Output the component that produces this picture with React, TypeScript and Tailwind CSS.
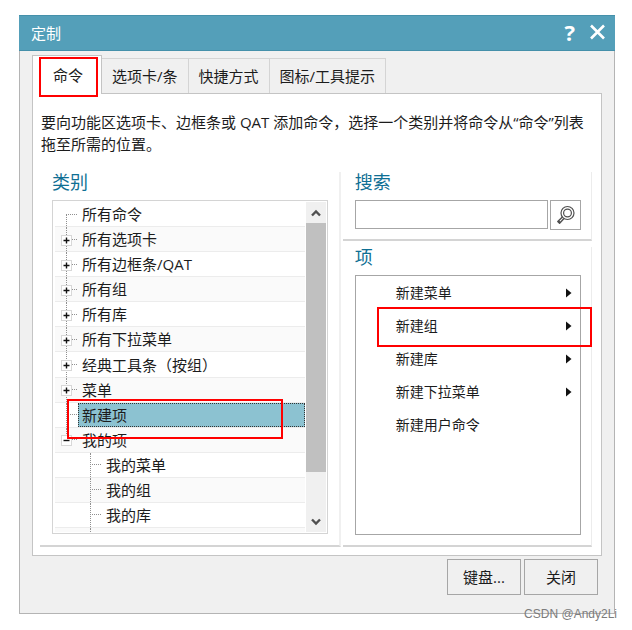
import clsx from 'clsx'
import { useState } from 'react'

type TreeItem = {
    label: string
    level: number
    state?: 'open' | 'closed'
}

const tabs = ['命令', '选项卡/条', '快捷方式', '图标/工具提示']

const categories: TreeItem[] = [
    { label: '所有命令', level: 0 },
    { label: '所有选项卡', level: 0, state: 'closed' },
    { label: '所有边框条/QAT', level: 0, state: 'closed' },
    { label: '所有组', level: 0, state: 'closed' },
    { label: '所有库', level: 0, state: 'closed' },
    { label: '所有下拉菜单', level: 0, state: 'closed' },
    { label: '经典工具条（按组）', level: 0, state: 'closed' },
    { label: '菜单', level: 0, state: 'closed' },
    { label: '新建项', level: 0 },
    { label: '我的项', level: 0, state: 'open' },
    { label: '我的菜单', level: 1 },
    { label: '我的组', level: 1 },
    { label: '我的库', level: 1 },
]

const items = [
    { label: '新建菜单', submenu: true },
    { label: '新建组', submenu: true },
    { label: '新建库', submenu: true },
    { label: '新建下拉菜单', submenu: true },
    { label: '新建用户命令', submenu: false },
]

function Highlight({ className }: { className: string }) {
    return (
        <span
            className={clsx(
                'pointer-events-none absolute z-20 border-2 border-[#f00]',
                className,
            )}
        />
    )
}

function Chevron({ up }: { up?: boolean }) {
    return (
        <svg width="12" height="10" viewBox="0 0 12 10" fill="none">
            <path
                d={up ? 'M2 7.5 6 3.5 10 7.5' : 'M2 2.5 6 6.5 10 2.5'}
                stroke="#505050"
                strokeWidth="2.4"
            />
        </svg>
    )
}

// dotted connector lines with the +/- box on top
function Branch({
    item,
    first,
    last,
}: {
    item: TreeItem
    first: boolean
    last: boolean
}) {
    return (
        <span
            className={clsx(
                'relative flex h-full w-[23px] shrink-0 items-center',
                item.level === 1 && 'ml-6',
            )}
        >
            <span
                className={clsx(
                    'absolute left-[11px] border-l border-dotted border-[#909090]',
                    first ? 'top-1/2' : 'top-0',
                    last ? 'bottom-1/2' : 'bottom-0',
                )}
            />
            <span className="ml-[11px] w-[11px] border-t border-dotted border-[#909090]" />
            {item.state && (
                <svg
                    className="absolute left-[6px]"
                    width="11"
                    height="13"
                    viewBox="0 0 11 13"
                >
                    <rect
                        x="0.5"
                        y="2.5"
                        width="10"
                        height="10"
                        fill="#fff"
                        stroke="#d8d8d8"
                    />
                    <path
                        d={
                            item.state === 'closed'
                                ? 'M2.5 7.5H8.5M5.5 4.5V10.5'
                                : 'M2.5 7.5H8.5'
                        }
                        stroke="#111"
                        strokeWidth="1.4"
                    />
                </svg>
            )}
        </span>
    )
}

function CategoryTree() {
    const [selected, setSelected] = useState('新建项')

    return (
        <div className="flex h-[334px] border border-[#d4d4d4] p-px">
            <div className="flex min-w-0 flex-1 flex-col pl-px">
                <ul className="flex flex-1 flex-col">
                    {categories.map((item, i) => (
                        <li
                            key={item.label}
                            className={clsx(
                                'relative flex-1 border-b border-[#ececec]',
                                i % 2 === 1 && 'bg-[#fafafa]',
                            )}
                        >
                            <button
                                className="flex h-full w-full items-center text-left"
                                onClick={() => setSelected(item.label)}
                            >
                                <Branch
                                    item={item}
                                    first={i === 0}
                                    last={item.state === 'open'}
                                />
                                <span
                                    className={clsx(
                                        'flex h-full flex-1 items-center border border-dotted pl-[3px] leading-5 whitespace-nowrap',
                                        selected === item.label
                                            ? 'border-[#333] bg-[#8cc2d1]'
                                            : 'border-transparent',
                                    )}
                                >
                                    {item.label}
                                </span>
                            </button>
                            {item.label === '新建项' && (
                                <Highlight className="-top-1 right-[22px] left-3 h-10" />
                            )}
                        </li>
                    ))}
                </ul>
                <div className="flex h-1 bg-[#fafafa] pl-[35px]">
                    <span className="border-l border-dotted border-[#909090]" />
                </div>
            </div>
            <div className="ml-px flex w-5 flex-col bg-[#f0f0f0]">
                <button
                    aria-label="向上滚动"
                    className="flex h-[21px] items-center justify-center"
                >
                    <Chevron up />
                </button>
                <div className="h-[249px] bg-[#c0c0c0]" />
                <div className="flex-1" />
                <button
                    aria-label="向下滚动"
                    className="flex h-[21px] items-center justify-center"
                >
                    <Chevron />
                </button>
            </div>
        </div>
    )
}

function SearchBox() {
    return (
        <section className="border-r border-b-2 border-r-[#ececec] border-b-[#d4d4d4] pr-[10px] pb-[9px] pl-3">
            <label
                htmlFor="search"
                className="mb-2 block text-lg leading-5 text-[#0f6f94]"
            >
                搜索
            </label>
            <div className="flex gap-[2px]">
                <input
                    id="search"
                    className="h-[29px] min-w-0 flex-1 border border-[#a6a6a6] px-2 outline-none"
                />
                <button
                    aria-label="查找"
                    className="flex h-[30px] w-[31px] shrink-0 items-center justify-center border border-[#a6a6a6]"
                >
                    <svg
                        width="20"
                        height="20"
                        viewBox="0 0 20 20"
                        fill="none"
                        stroke="#505050"
                    >
                        <circle cx="11.5" cy="8" r="6.5" strokeWidth="1.2" />
                        <circle cx="11.5" cy="8" r="3.9" strokeWidth="1.2" />
                        <path
                            d="M6.4 12 1.8 16.4 3.6 18.3 8 13.6"
                            strokeWidth="1.4"
                            strokeLinejoin="round"
                        />
                        <path d="M2.2 16 4 17.8" strokeWidth="2" />
                    </svg>
                </button>
            </div>
        </section>
    )
}

function ItemList() {
    return (
        <section className="flex flex-1 flex-col border-r border-b-2 border-r-[#ececec] border-b-[#d4d4d4] pr-[10px] pb-[10px] pl-3">
            <h2 className="mb-2 text-lg leading-5 text-[#0f6f94]">项</h2>
            <ul className="flex-1 border border-[#a6a6a6] text-sm">
                {items.map((item) => (
                    <li key={item.label} className="relative">
                        <button className="flex h-[33px] w-full items-center justify-between pr-2 pl-10 text-left">
                            {item.label}
                            {item.submenu && (
                                <svg width="6" height="10" viewBox="0 0 6 10">
                                    <path d="M0 0.5 5.5 5 0 9.5Z" fill="#111" />
                                </svg>
                            )}
                        </button>
                        {item.label === '新建组' && (
                            <Highlight className="-top-[2px] -right-3 left-[21px] h-10" />
                        )}
                    </li>
                ))}
            </ul>
        </section>
    )
}

export default function App() {
    const [tab, setTab] = useState('命令')

    return (
        <div className="relative min-h-screen bg-white pt-[15px] pr-[17px] pb-4 pl-[19px] font-['Open_Sans','Noto_Sans_CJK_SC',sans-serif] text-[15px] text-[#1c1c1c]">
            <div className="border border-t-0 border-[#b4b4b4] bg-[#f0f0f0]">
                <header className="-mx-px flex h-9 items-center border-y border-[#4590aa] bg-[#549fb9] pr-2 pl-3 text-white">
                    <h1 className="flex-1 leading-5">定制</h1>
                    <div className="flex items-center gap-[14px] pb-[3px]">
                        <button
                            aria-label="帮助"
                            className="text-[22px] leading-5 font-bold"
                        >
                            ?
                        </button>
                        <button aria-label="关闭窗口">
                            <svg
                                width="18"
                                height="16"
                                viewBox="0 0 18 16"
                                stroke="#fff"
                                strokeWidth="2.6"
                            >
                                <path d="M2 1.5 15 14.5M15 1.5 2 14.5" />
                            </svg>
                        </button>
                    </div>
                </header>

                <main className="pt-1 pr-3 pb-[18px] pl-3">
                    <nav className="flex items-end">
                        {tabs.map((name) => (
                            <div key={name} className="relative">
                                <button
                                    onClick={() => setTab(name)}
                                    className={clsx(
                                        'relative block border border-b-0 leading-5',
                                        tab === name
                                            ? 'z-10 -mb-px h-[39px] border-[#c4c4c4] bg-white pr-[18px] pl-5'
                                            : '-ml-px h-[35px] border-[#d4d4d4] px-[10px]',
                                    )}
                                >
                                    {name}
                                </button>
                                {name === '命令' && (
                                    <Highlight className="top-[2px] right-1 left-[7px] h-10" />
                                )}
                            </div>
                        ))}
                    </nav>

                    <div className="border border-[#c4c4c4] bg-white pt-[17px] pr-[9px] pb-2 pl-[7px]">
                        <p className="pl-px leading-[22px]">
                            要向功能区选项卡、边框条或 QAT
                            添加命令，选择一个类别并将命令从“命令”列表拖至所需的位置。
                        </p>
                        <div className="mt-[17px] grid grid-cols-[minmax(0,41fr)_minmax(0,34fr)] gap-[2px]">
                            <section className="border-r-2 border-b-2 border-r-[#f0f0f0] border-b-[#d4d4d4] pr-[11px] pb-[11px] pl-3">
                                <h2 className="mb-2 text-lg leading-5 text-[#0f6f94]">
                                    类别
                                </h2>
                                <CategoryTree />
                            </section>
                            <div className="flex flex-col gap-[6px]">
                                <SearchBox />
                                <ItemList />
                            </div>
                        </div>
                    </div>

                    <footer className="mt-[3px] flex justify-end gap-[3px] pr-1">
                        <button className="h-9 w-[74px] border border-[#a6a6a6]">
                            键盘...
                        </button>
                        <button className="h-9 w-[74px] border border-[#a6a6a6]">
                            关闭
                        </button>
                    </footer>
                </main>
            </div>
            <p className="absolute right-[15px] bottom-2 font-['Liberation_Sans',sans-serif] text-xs leading-4 text-[#7c7c7c]">
                CSDN @Andy2Li
            </p>
        </div>
    )
}
